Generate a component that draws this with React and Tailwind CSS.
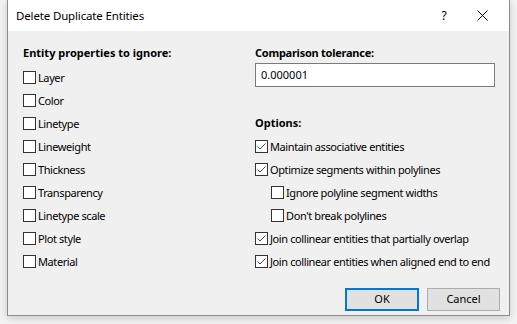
import React from 'react';

const font = { fontFamily: '"Noto Sans", "Open Sans", sans-serif' };

const CheckBox = ({ checked }) => (
  <span className="w-[13px] h-[13px] border border-[#333333] bg-white flex items-center justify-center shrink-0">
    {checked && (
      <svg width="11" height="11" viewBox="0 0 11 11">
        <polyline points="1.5,5.5 4,8 9.5,2.5" fill="none" stroke="#4a4a4a" strokeWidth="1" />
      </svg>
    )}
  </span>
);

const Row = ({ label, checked, indent }) => (
  <div className={`h-[23px] flex items-center gap-[2px] whitespace-nowrap ${indent ? 'pl-[16px]' : ''}`}>
    <CheckBox checked={checked} />
    <span className="text-[11px] tracking-[-0.4px] text-black leading-none">{label}</span>
  </div>
);

const ignoreProps = [
  'Layer',
  'Color',
  'Linetype',
  'Lineweight',
  'Thickness',
  'Transparency',
  'Linetype scale',
  'Plot style',
  'Material',
];

const options = [
  { label: 'Maintain associative entities', checked: true },
  { label: 'Optimize segments within polylines', checked: true },
  { label: 'Ignore polyline segment widths', indent: true },
  { label: "Don't break polylines", indent: true },
  { label: 'Join collinear entities that partially overlap', checked: true },
  { label: 'Join collinear entities when aligned end to end', checked: true },
];

export default function App() {
  return (
    <div className="w-[517px] h-[324px] bg-[#f3f3f3] pl-[7px] overflow-hidden" style={font}>
      <div className="w-[503px] h-[316px] bg-[#f0f0f0] border border-t-0 border-[#8c8c8c] shadow-[0_2px_8px_rgba(0,0,0,0.18)] flex flex-col">
        {/* Title bar */}
        <div className="h-[31px] bg-white flex items-center shrink-0">
          <span className="pl-[8px] text-[11.5px] tracking-[-0.15px] text-black flex-1">Delete Duplicate Entities</span>
          <span className="w-[30px] text-center text-[12px] text-black">?</span>
          <span className="w-[46px] flex justify-center items-center mr-[4px]">
            <svg width="11" height="11" viewBox="0 0 11 11">
              <path d="M0.5 0.5 L10.5 10.5 M10.5 0.5 L0.5 10.5" stroke="#000" strokeWidth="1" />
            </svg>
          </span>
        </div>

        {/* Body */}
        <div className="flex pt-[14px]">
          <div className="w-[247px] pl-[15px]">
            <div className="h-[16px] text-[11px] font-bold text-black leading-[16px] whitespace-nowrap">Entity properties to ignore:</div>
            <div className="mt-[5px]">
              {ignoreProps.map((p) => (
                <Row key={p} label={p} />
              ))}
            </div>
          </div>
          <div className="flex-1">
            <div className="h-[16px] text-[11px] font-bold tracking-[-0.25px] text-black leading-[16px] whitespace-nowrap">Comparison tolerance:</div>
            <div className="mt-[2px] w-[240px] h-[24px] bg-white border border-[#7a7a7a] flex items-center pl-[5px] text-[11px] text-black">
              0.000001
            </div>
            <div className="mt-[28px] h-[16px] text-[11px] font-bold text-black leading-[16px]">Options:</div>
            <div className="mt-[4px]">
              {options.map((o) => (
                <Row key={o.label} label={o.label} checked={o.checked} indent={o.indent} />
              ))}
            </div>
          </div>
        </div>

        {/* Buttons */}
        <div className="mt-auto flex justify-end gap-[8px] pr-[9px] pb-[4px]">
          <button className="w-[74px] h-[23px] bg-[#e1e1e1] border-2 border-[#0078d7] text-[11px] text-black">OK</button>
          <button className="w-[73px] h-[23px] bg-[#e1e1e1] border border-[#adadad] text-[11px] text-black">Cancel</button>
        </div>
      </div>
    </div>
  );
}
